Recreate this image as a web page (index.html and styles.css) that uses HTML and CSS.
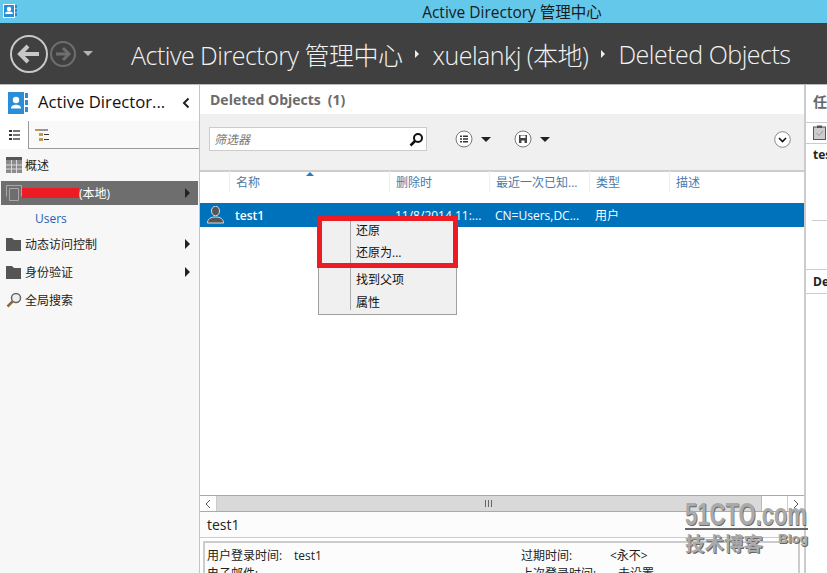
FILE: index.html
```html
<!DOCTYPE html>
<html lang="zh-CN">
<head>
  <meta charset="UTF-8">
  <title>Active Directory 管理中心</title>
  <link rel="stylesheet" href="styles.css">
</head>
<body>
  <div class="titlebar">
    <svg class="app-icon" width="18" height="18" viewBox="0 0 18 18">
      <rect x="3.500" y="3.500" width="11" height="13" fill="#2a8dd8" stroke="#fff"/>
      <rect x="15" y="4" width="2" height="3" fill="#2a8dd8"/><rect x="15" y="8" width="2" height="3" fill="#2a8dd8"/><rect x="15" y="12" width="2" height="3" fill="#2a8dd8"/>
      <circle cx="9" cy="8" r="2.2" fill="#fff"/><path d="M5 13c0-2 2-2.500 4-2.500s4 .5 4 2.500z" fill="#fff"/>
    </svg>
    <span class="title-text">Active Directory 管理中心</span>
  </div>

  <header class="header">
    <svg class="nav" width="94" height="40" viewBox="0 0 94 40">
      <circle cx="19" cy="20" r="18" fill="none" stroke="#c8c8c8" stroke-width="2"/>
      <path d="M29 20H11M18 12l-8 8 8 8" fill="none" stroke="#c8c8c8" stroke-width="4"/>
      <circle cx="53" cy="20" r="12" fill="none" stroke="#6e6e6e" stroke-width="2"/>
      <path d="M46 20h12M53 14l6 6-6 6" fill="none" stroke="#6e6e6e" stroke-width="3"/>
      <path d="M73 17h10l-5 5z" fill="#b4b4b4"/>
    </svg>
    <div class="crumbs">
      <span>Active Directory 管理中心</span><i class="sep"></i><span>xuelankj (本地)</span><i class="sep"></i><span>Deleted Objects</span>
    </div>
  </header>

  <div class="body">
    <aside class="sidebar">
      <div class="side-head">
        <svg width="20" height="22" viewBox="0 0 20 22">
          <rect x="0" y="0" width="16" height="22" fill="#2a8dd8"/>
          <rect x="17" y="1" width="3" height="5" fill="#2a8dd8"/><rect x="17" y="8" width="3" height="5" fill="#2a8dd8"/><rect x="17" y="15" width="3" height="5" fill="#2a8dd8"/>
          <circle cx="8" cy="8" r="3.200" fill="#fff"/><path d="M3 16.500c0-3 2.500-3.800 5-3.800s5 .8 5 3.800z" fill="#fff"/>
        </svg>
        <span class="side-title">Active Director...</span>
        <svg class="collapse" width="8" height="12" viewBox="0 0 8 12"><path d="M6.500 1.500 2 6l4.500 4.500" fill="none" stroke="#222" stroke-width="2"/></svg>
      </div>
      <div class="tabs">
        <div class="tab active">
          <svg width="11" height="12" viewBox="0 0 11 12"><path d="M0 1h3v2H0zM0 5h3v2H0zM0 9h3v2H0z" fill="#333"/><path d="M4 1h7v2H4zM4 5h7v2H4zM4 9h7v2H4z" fill="#777"/></svg>
        </div>
        <div class="tab tree-tab">
          <svg width="15" height="14" viewBox="0 0 15 14"><path d="M0 1h4v2H0zM4 5h4v3H4zM4 10h4v3H4z" fill="#c09a50"/><path d="M4 2h9M9 6.500h5M9 11.500h5" stroke="#333"/></svg>
        </div>
      </div>
      <ul class="tree">
        <li class="node">
          <svg width="16" height="16" viewBox="0 0 16 16"><path d="M0 0h16v16H0z" fill="#8a8a8a"/><path d="M0 1.500h16" stroke="#555" stroke-width="3"/><path d="M5.500 3v13M10.500 3v13M0 8h16M0 12h16" stroke="#d8d8d8"/></svg>
          <span>概述</span>
        </li>
        <li class="node selected">
          <svg width="16" height="18" viewBox="0 0 16 18" fill="none" stroke="#a8a8a8"><path d="M.5 1.500h15M.5 1.500v11M15.500 1.500v11M3.500 4.500h9v12h-9z"/></svg>
          <span class="node-label"><span class="redact"></span>(本地)</span>
          <i class="arrow"></i>
        </li>
        <li class="child">Users</li>
        <li class="node">
          <svg width="16" height="13" viewBox="0 0 16 13"><path d="M0 0h6l2 2h7v11H0z" fill="#555"/></svg>
          <span class="node-label">动态访问控制</span>
          <i class="arrow"></i>
        </li>
        <li class="node">
          <svg width="16" height="13" viewBox="0 0 16 13"><path d="M0 0h6l2 2h7v11H0z" fill="#555"/></svg>
          <span class="node-label">身份验证</span>
          <i class="arrow"></i>
        </li>
        <li class="node">
          <svg width="16" height="16" viewBox="0 0 16 16"><circle cx="10" cy="6" r="4.500" fill="#eee" stroke="#666" stroke-width="1.500"/><path d="M6.500 9.500 1.500 14.500" stroke="#8a6a3a" stroke-width="2.500"/></svg>
          <span>全局搜索</span>
        </li>
      </ul>
    </aside>

    <main class="main">
      <div class="main-title"><b>Deleted Objects</b><b class="count">(1)</b></div>
      <div class="toolbar">
        <div class="filter">
          <span class="filter-hint">筛选器</span>
          <svg width="15" height="15" viewBox="0 0 15 15"><circle cx="9" cy="6" r="4" fill="none" stroke="#111" stroke-width="2"/><path d="M6 9l-4.500 4.500" stroke="#111" stroke-width="2.500"/></svg>
        </div>
        <div class="tool first">
          <svg width="18" height="18" viewBox="0 0 18 18"><circle cx="9" cy="9" r="8" fill="#fff" stroke="#777"/><path d="M5 5.500h2v1.500H5zM5 8.300h2v1.500H5zM5 11h2v1.500H5zM8 5.500h5v1.500H8zM8 8.300h5v1.500H8zM8 11h5v1.500H8z" fill="#333"/></svg>
          <i class="caret"></i>
        </div>
        <div class="tool">
          <svg width="18" height="18" viewBox="0 0 18 18"><circle cx="9" cy="9" r="8" fill="#fff" stroke="#777"/><path d="M5 5h8v8H5z" fill="#444"/><path d="M6.500 5.500h5v2.500h-5zM7.500 10.500h3V13h-3z" fill="#fff"/></svg>
          <i class="caret"></i>
        </div>
        <svg class="expand" width="17" height="17" viewBox="0 0 17 17"><circle cx="8.500" cy="8.500" r="7.800" fill="#fff" stroke="#888"/><path d="M5 7l3.500 3.500L12 7" fill="none" stroke="#111" stroke-width="1.600"/></svg>
      </div>

      <div class="grid-head">
        <div class="col c0"></div>
        <div class="col c1">名称<i class="sort"></i></div>
        <div class="col c2">删除时</div>
        <div class="col c3">最近一次已知...</div>
        <div class="col c4">类型</div>
        <div class="col c5">描述</div>
      </div>
      <div class="grid-row">
        <div class="c0 user-icon">
          <svg width="17" height="18" viewBox="0 0 17 18"><ellipse cx="8.500" cy="5" rx="4" ry="4.800" fill="#555" stroke="#ddd"/><path d="M.5 17c0-4 3-6 8-6s8 2 8 6z" fill="#555" stroke="#ddd"/></svg>
        </div>
        <div class="c1 name">test1</div>
        <div class="c2">11/8/2014 11:...</div>
        <div class="c3">CN=Users,DC...</div>
        <div class="c4">用户</div>
      </div>
      <div class="grid-empty"></div>

      <div class="hscroll">
        <div class="sbtn">
          <svg width="6" height="10" viewBox="0 0 6 10"><path d="M5 1 1 5l4 4" fill="none" stroke="#555"/></svg>
        </div>
        <div class="thumb"><i></i><i></i><i></i></div>
        <div class="track"></div>
        <div class="sbtn">
          <svg width="6" height="10" viewBox="0 0 6 10"><path d="M1 1l4 4-4 4" fill="none" stroke="#555"/></svg>
        </div>
      </div>
      <div class="detail-title">test1</div>
      <div class="detail">
        <div class="detail-col">
          <div class="kv"><span class="k">用户登录时间:</span><span>test1</span></div>
          <div class="kv"><span class="k">电子邮件:</span></div>
        </div>
        <div class="detail-col right">
          <div class="kv"><span class="k">过期时间:</span><span>&lt;永不&gt;</span></div>
          <div class="kv"><span class="k">上次登录时间:</span><span class="unset">未设置</span></div>
        </div>
      </div>
    </main>

    <aside class="tasks">
      <div class="tasks-head">任</div>
      <div class="tasks-icon">
        <svg width="13" height="15" viewBox="0 0 13 15"><rect x=".5" y="2" width="12" height="12.500" fill="#ccc" stroke="#555"/><path d="M4 .5h5V3H4z" fill="#555"/><path d="M3.500 8l2.500 2.500L10 6" fill="none" stroke="#999"/></svg>
      </div>
      <div class="tasks-name">test1</div>
      <div class="tasks-gap"><hr></div>
      <div class="tasks-name de">Deleted Objects</div>
    </aside>
  </div>

  <div class="ctx">
    <div class="ctx-item">还原</div>
    <div class="ctx-item">还原为...</div>
    <div class="ctx-rule"></div>
    <div class="ctx-item">找到父项</div>
    <div class="ctx-item">属性</div>
  </div>
  <div class="highlight"></div>

  <div class="mark">
    <div class="mark-logo"><span>51CTO.com</span></div>
    <div class="mark-sub"><span>技术博客</span><small>Blog</small></div>
  </div>
</body>
</html>
```

FILE: styles.css
```css
* {
  box-sizing: border-box;
}
html, body {
  height: 100%;
}
body {
  margin: 0;
  overflow: hidden;
  font-family: "Open Sans", "Noto Sans CJK SC", sans-serif;
  font-size: 12px;
  color: #222;
  background: #fff;
  display: flex;
  flex-direction: column;
}

.titlebar {
  height: 23px;
  background: #63c8ea;
  display: flex;
  align-items: center;
  justify-content: center;
  flex-shrink: 0;
  position: relative;
  font-size: 15.5px;
  color: #1a1a1a;
}
.app-icon {
  position: absolute;
  left: 0;
  top: 1px;
}
.title-text {
  margin-left: 197px;
}

.header {
  height: 62px;
  background: #404040;
  border-bottom: 1px solid #bbb;
  display: flex;
  align-items: center;
  flex-shrink: 0;
  padding-left: 10px;
}
.nav {
  flex-shrink: 0;
}
.crumbs {
  margin-left: 27px;
  display: flex;
  align-items: center;
  color: #f2f2f2;
  font-size: 25px;
  font-weight: 300;
  white-space: nowrap;
  letter-spacing: -0.5px;
}
.sep {
  width: 0;
  height: 0;
  border-left: 4px solid #eee;
  border-top: 4px solid transparent;
  border-bottom: 4px solid transparent;
  margin: 0 13px;
}

.body {
  flex: 1;
  display: flex;
  min-height: 0;
}

.sidebar {
  width: 200px;
  background: #f7f7f7;
  border-right: 1px solid #c4c4c4;
  flex-shrink: 0;
}
.side-head {
  height: 36px;
  background: #fff;
  display: flex;
  align-items: center;
  padding: 0 9px 0 8px;
}
.side-title {
  font-size: 16.7px;
  margin-left: 10px;
  padding-bottom: 3px;
  flex: 1;
  color: #111;
  white-space: nowrap;
}
.tabs {
  height: 28px;
  display: flex;
  border-bottom: 1px solid #999;
  background: #f9f9f9;
}
.tab {
  width: 29px;
  display: flex;
  align-items: center;
  justify-content: center;
  padding-left: 1px;
}
.tab.active {
  background: #fff;
  border-right: 1px solid #999;
  margin-bottom: -1px;
  position: relative;
}
.tab.tree-tab {
  padding-left: 0;
  margin-left: -1px;
}
.tree {
  list-style: none;
  margin: 0;
  padding: 0;
}
.node {
  height: 24px;
  margin: 4px 1px 0 1px;
  display: flex;
  align-items: center;
  gap: 2px;
  padding-left: 5px;
  color: #222;
}
.node svg {
  margin-right: 1px;
  flex-shrink: 0;
}
.node.selected {
  background: #6e6e6e;
  color: #fff;
}
.node-label {
  flex: 1;
  display: flex;
  align-items: center;
}
.redact {
  width: 57px;
  height: 10px;
  margin-left: -3px;
  background: #ed1c24;
}
.arrow {
  width: 0;
  height: 0;
  border-left: 5px solid #222;
  border-top: 5px solid transparent;
  border-bottom: 5px solid transparent;
  margin-right: 8px;
}
.child {
  height: 24px;
  padding-left: 35px;
  margin: 1px 0 -2px;
  display: flex;
  align-items: center;
  color: #2a5fb0;
}

.main {
  flex: 1;
  min-width: 0;
  display: flex;
  flex-direction: column;
}
.main-title {
  height: 29px;
  padding: 0 0 0 10px;
  display: flex;
  align-items: center;
  gap: 7px;
  font-size: 14px;
  color: #6b6b6b;
}
.toolbar {
  height: 58px;
  background: #f0f0f0;
  border-bottom: 2px solid #ccc;
  display: flex;
  align-items: center;
  padding: 0 13px 6px 9px;
}
.filter {
  width: 218px;
  height: 24px;
  background: #fff;
  border: 1px solid #ccc;
  display: flex;
  align-items: center;
  justify-content: space-between;
  padding: 0 2px 0 4px;
}
.filter-hint {
  font-style: italic;
  color: #777;
}
.tool {
  display: flex;
  align-items: center;
  gap: 8px;
  margin-left: 23px;
}
.tool.first {
  margin-left: 28px;
}
.caret {
  width: 0;
  height: 0;
  border-top: 5px solid #222;
  border-left: 5px solid transparent;
  border-right: 5px solid transparent;
}
.expand {
  margin-left: auto;
}

.grid-head,
.grid-row {
  display: grid;
  grid-template-columns: 29px 160px 100px 100px 80px 1fr;
  align-items: center;
}
.grid-head {
  height: 30px;
  color: #4a7aa8;
  margin-top: -1px;
  align-items: start;
}
.col {
  height: 21px;
  padding-left: 6px;
  border-left: 1px solid #eee;
  display: flex;
  align-items: center;
  position: relative;
}
.col.c0 {
  border-left: 0;
}
.sort {
  position: absolute;
  left: 76px;
  top: 1px;
  border-bottom: 4px solid #2a7ab8;
  border-left: 4px solid transparent;
  border-right: 4px solid transparent;
}
.grid-row {
  height: 24px;
  margin-top: 2px;
  background: #0072bc;
  color: #fff;
  white-space: nowrap;
}
.grid-row .c1 {
  padding-left: 6px;
}
.grid-row .name {
  font-weight: 600;
}
.grid-row .c2,
.grid-row .c3,
.grid-row .c4 {
  padding-left: 6px;
}
.user-icon {
  display: flex;
  justify-content: flex-end;
  padding-right: 5px;
  height: 18px;
}
.grid-empty {
  flex: 1;
}

.hscroll {
  height: 17px;
  display: flex;
  border-top: 1px solid #aaa;
  border-bottom: 1px solid #aaa;
  flex-shrink: 0;
}
.sbtn {
  width: 17px;
  display: flex;
  align-items: center;
  justify-content: center;
  background: #fff;
  border-right: 1px solid #ccc;
  flex-shrink: 0;
}
.sbtn:last-child {
  border-right: 0;
  border-left: 1px solid #ccc;
}
.thumb {
  width: 545px;
  background: #d9d9d9;
  border-right: 1px solid #bbb;
  display: flex;
  align-items: center;
  justify-content: center;
  gap: 1px;
}
.thumb i {
  width: 1px;
  height: 7px;
  background: #666;
  margin-right: 1px;
}
.track {
  flex: 1;
  background: #fff;
}
.detail-title {
  height: 26px;
  padding-left: 7px;
  display: flex;
  align-items: center;
  font-size: 14px;
  background: #fcfcfc;
  border-bottom: 1px solid #ccc;
  flex-shrink: 0;
}
.detail {
  height: 32px;
  margin: 3px 4px 0 3px;
  border: 2px solid #ccc;
  border-bottom: 0;
  background: #fcfcfc;
  padding: 3px 2px;
  display: flex;
  overflow: hidden;
  flex-shrink: 0;
}
.detail-col {
  flex: none;
  width: 314px;
}
.kv {
  display: flex;
  height: 18px;
  align-items: center;
  white-space: nowrap;
}
.k {
  width: 87px;
}
.right .k {
  width: 89px;
}
.right .unset {
  margin-left: 8px;
}

.tasks {
  width: 23px;
  flex-shrink: 0;
  border-left: 2px solid #ccc;
  overflow: hidden;
  white-space: nowrap;
}
.tasks-head {
  height: 38px;
  padding: 0 0 6px 7px;
  display: flex;
  align-items: center;
  font-size: 14px;
  font-weight: 600;
  color: #666;
  border-bottom: 1px solid #ccc;
}
.tasks-icon {
  height: 21px;
  padding: 2px 0 0 7px;
  border-bottom: 1px solid #ccc;
}
.tasks-name {
  height: 21px;
  padding-left: 7px;
  display: flex;
  align-items: center;
  font-weight: 700;
}
.tasks-gap {
  height: 105px;
  border-bottom: 1px solid #ccc;
  padding-top: 55px;
}
.tasks-gap hr {
  margin: 0 0 0 6px;
  border: 0;
  border-top: 1px solid #ccc;
}
.tasks-name.de {
  height: 24px;
  border-bottom: 1px solid #ccc;
}

/* context menu lies over the grid */
.ctx {
  position: absolute;
  left: 318px;
  top: 218px;
  width: 139px;
  height: 97px;
  background: #f0f0f0;
  border: 1px solid #a0a0a0;
  color: #111;
}
.ctx::before {
  content: "";
  position: absolute;
  left: 31px;
  top: 2px;
  bottom: 4px;
  border-left: 1px solid #aaa;
}
.ctx-item {
  height: 22px;
  padding-left: 37px;
  display: flex;
  align-items: center;
}
.ctx-item:last-child {
  margin-top: 1px;
}
.ctx-rule {
  height: 5px;
}
.highlight {
  position: absolute;
  left: 317px;
  top: 216px;
  width: 141px;
  height: 52px;
  border: 5px solid #ed1c24;
}

/* 51CTO watermark in the corner */
.mark {
  position: absolute;
  left: 685px;
  top: 500px;
  width: 123px;
  color: #aaa;
  text-shadow: 1px 1px 0 #666;
  font-family: "Liberation Sans", sans-serif;
  font-weight: 700;
}
.mark-logo {
  height: 30px;
  font-size: 31px;
  line-height: 30px;
  border-bottom: 2px solid #666;
  white-space: nowrap;
}
.mark-logo span {
  display: inline-block;
  transform: scaleX(0.71);
  transform-origin: left center;
}
.mark-sub {
  display: flex;
  justify-content: space-between;
  margin-top: 1px;
  font-family: "Noto Sans CJK SC", sans-serif;
  font-size: 19.5px;
  line-height: 24px;
}
.mark-sub small {
  font-family: "Liberation Sans", sans-serif;
  font-size: 13.5px;
  margin-top: -4px;
}
```
